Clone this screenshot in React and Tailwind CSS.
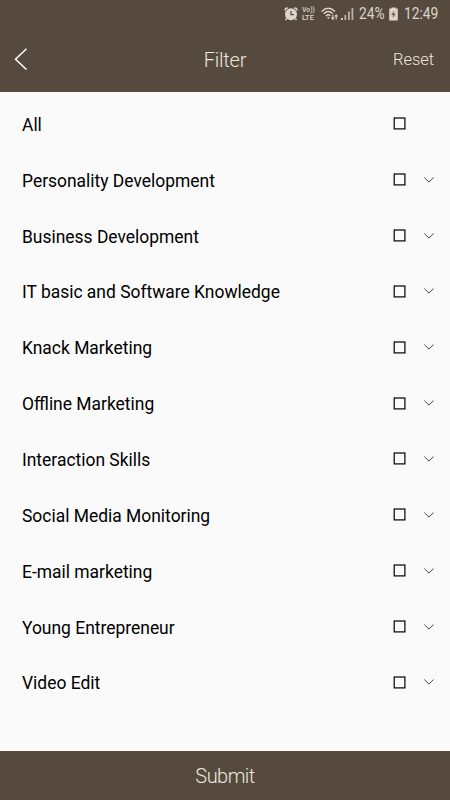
import React, { useState } from 'react';

const CATEGORIES = [
  { name: 'All', expandable: false },
  { name: 'Personality Development', expandable: true },
  { name: 'Business Development', expandable: true },
  { name: 'IT basic and Software Knowledge', expandable: true },
  { name: 'Knack Marketing', expandable: true },
  { name: 'Offline Marketing', expandable: true },
  { name: 'Interaction Skills', expandable: true },
  { name: 'Social Media Monitoring', expandable: true },
  { name: 'E-mail marketing', expandable: true },
  { name: 'Young Entrepreneur', expandable: true },
  { name: 'Video Edit', expandable: true },
];

function AlarmIcon() {
  return (
    <svg className="w-[14px] h-[14px]" viewBox="0 0 14 14" fill="none">
      <path d="M1 3.6Q1 1 3.8 1M13 3.6Q13 1 10.2 1M2.8 11.4 1.6 13.2M11.2 11.4l1.2 1.8" stroke="currentColor" strokeWidth="1.5" />
      <circle cx="7" cy="7.2" r="6" fill="currentColor" />
      <path d="M7 4v3.6h2.8" stroke="#564a3e" strokeWidth="1.2" />
    </svg>
  );
}

function WifiIcon() {
  return (
    <svg className="w-[18px] h-[14px]" viewBox="0 0 18 14" fill="none" stroke="currentColor">
      <path d="M.6 4.4Q7.3 -2 14 4.4M2.8 6.7Q7.3 2.4 11.8 6.7M5 9Q7.3 6.8 9.4 8.8" strokeWidth="1.4" />
      <path d="M6 10.4Q7.3 9.4 8.6 10.4L7.3 11.9z" fill="currentColor" stroke="none" />
      <path d="M11.8 7.8v4M15.2 8.2v4.4" strokeWidth="1.1" />
      <path d="M9.8 10.6h4l-2 2.6zM13.2 9.6h4l-2-2.6z" fill="currentColor" stroke="none" />
    </svg>
  );
}

function SignalIcon() {
  return (
    <svg className="w-[13px] h-[14px]" viewBox="0 0 13 14" fill="currentColor">
      <rect x="0" y="11" width="1.8" height="2" />
      <rect x="3.4" y="8" width="1.8" height="5" opacity="0.75" />
      <rect x="7" y="4.5" width="1.8" height="8.5" opacity="0.75" />
      <rect x="10.5" y="1" width="1.8" height="12" opacity="0.75" />
    </svg>
  );
}

function BatteryIcon() {
  return (
    <svg className="w-[9px] h-[14px]" viewBox="0 0 9 14">
      <path d="M2.4 .4h4.2v1.2H8.8V13.4H.2V1.6h2.2z" fill="currentColor" />
      <path d="M5.3 3.4 2.2 7.9h2L3.7 11.3 6.8 6.8H4.8z" fill="#564a3e" opacity="0.85" />
    </svg>
  );
}

function StatusBar() {
  return (
    <div className="h-7 pl-[284px] flex items-center text-[#ddd4ca]">
      <AlarmIcon />
      <div className="ml-[4px] w-[14px] h-[14px] flex flex-col font-medium">
        <span className="h-[6px] text-[7px] leading-[6px] origin-left scale-x-[0.98]">Vo))</span>
        <span className="h-[8px] text-[8px] leading-[9px] origin-left scale-x-[0.93]">LTE</span>
      </div>
      <div className="ml-[5px]"><WifiIcon /></div>
      <div className="ml-[2px]"><SignalIcon /></div>
      <span className="ml-[5px] w-[26px] text-[16px] leading-none whitespace-nowrap">
        <span className="inline-block origin-left scale-x-[0.86]">24%</span>
      </span>
      <div className="ml-[4px]"><BatteryIcon /></div>
      <span className="ml-[6px] text-[16px] leading-none whitespace-nowrap">
        <span className="inline-block origin-left scale-x-[0.86]">12:49</span>
      </span>
    </div>
  );
}

function App() {
  const [selected, setSelected] = useState([]);

  // Check or uncheck a category
  const toggle = (name) => {
    setSelected((prev) =>
      prev.includes(name) ? prev.filter((n) => n !== name) : [...prev, name]
    );
  };

  return (
    <div className="w-full h-screen flex flex-col overflow-hidden bg-[#fafafa] font-['Roboto',sans-serif]">
      {/* Header */}
      <header className="h-[92px] shrink-0 bg-[#564a3e] text-[#eee6dc]">
        <StatusBar />
        <div className="h-16 pl-[14px] pr-4 grid grid-cols-[1fr_auto_1fr] items-center">
          <button className="justify-self-start pb-[2px]" aria-label="Back">
            <svg className="w-[14px] h-[22px]" viewBox="0 0 14 22" fill="none" stroke="white" strokeWidth="1.5">
              <path d="M12.5 .8 1.5 11.2 12.5 21.5" />
            </svg>
          </button>
          <h1 className="pl-[2px] text-[20px] font-light leading-none tracking-[-0.2px]">Filter</h1>
          <button className="justify-self-end pt-px text-[16.5px] font-light leading-none tracking-[-0.05px]" onClick={() => setSelected([])}>
            Reset
          </button>
        </div>
      </header>

      {/* Category list */}
      <main className="flex-1 pt-[5px]">
        {CATEGORIES.map((category) => (
          <div key={category.name} className="h-[55.85px] pl-[22px] pr-4 flex items-center text-black">
            <span className="flex-1 text-[17.45px] leading-[18px]">{category.name}</span>
            <button
              className="mb-[2px]"
              aria-label={`Select ${category.name}`}
              onClick={() => toggle(category.name)}
            >
              <svg className="w-[13px] h-[13px]" viewBox="0 0 13 13" stroke="black" strokeWidth="1.2">
                <rect x="1.2" y="1" width="10.7" height="10.9" fill={selected.includes(category.name) ? 'black' : 'none'} />
              </svg>
            </button>
            <div className="ml-[18px] mb-[2px] w-[10px]">
              {category.expandable && (
                <svg className="w-[10px] h-[6px]" viewBox="0 0 10 6" fill="none" stroke="#333" strokeWidth="0.9">
                  <path d="M.4 .5 5 5.1 9.6 .5" />
                </svg>
              )}
            </div>
          </div>
        ))}
      </main>

      {/* Submit */}
      <button className="h-[49px] shrink-0 bg-[#564a3e] text-[#eee6dc] text-[20px] font-light leading-none tracking-[-0.55px]">
        Submit
      </button>
    </div>
  );
}

export default App;
